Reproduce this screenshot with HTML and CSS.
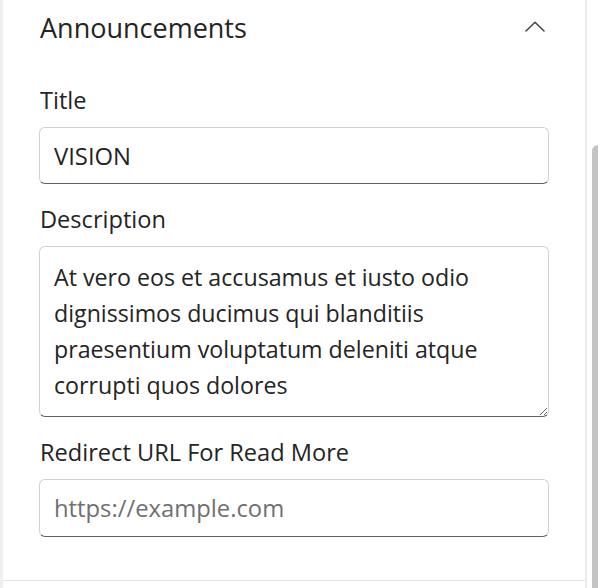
FILE: index.html
```html
<!DOCTYPE html>
<html lang="en">
<head>
<meta charset="utf-8">
<title>Announcements</title>
<link rel="stylesheet" href="styles.css">
</head>
<body>
<div class="frame">
  <div class="gutter"></div>
  <div class="panel">
    <section class="section">
      <div class="header">
        <h2 class="heading">Announcements</h2>
        <svg class="chevron" width="20" height="11" viewBox="0 0 20 11" aria-hidden="true">
          <path d="M1 10 L10 1.2 L19 10" fill="none" stroke="#424242" stroke-width="1.5" stroke-linecap="round" stroke-linejoin="round"/>
        </svg>
      </div>
      <div class="field">
        <label class="label" for="title">Title</label>
        <input class="input" id="title" type="text" value="VISION">
      </div>
      <div class="field">
        <label class="label" for="desc">Description</label>
        <textarea class="textarea" id="desc">At vero eos et accusamus et iusto odio dignissimos ducimus qui blanditiis praesentium voluptatum deleniti atque corrupti quos dolores</textarea>
      </div>
      <div class="field">
        <label class="label" for="url">Redirect URL For Read More</label>
        <input class="input input-url" id="url" type="text" placeholder="https://example.com">
      </div>
    </section>
  </div>
  <div class="scrollbar"><div class="thumb"></div></div>
</div>
</body>
</html>
```
FILE: styles.css
```css
* { box-sizing: border-box; }
html, body { margin: 0; padding: 0; background: #ffffff; }
body {
  font-family: "Open Sans", "Noto Sans", sans-serif;
  color: #242424;
}
.frame {
  display: flex;
  width: 598px;
  height: 588px;
  overflow: hidden;
}
.gutter {
  width: 3px;
  flex: none;
  background: #efefef;
}
.panel {
  width: 584px;
  flex: none;
  border-right: 2px solid #ebebeb;
  background: #fff;
}
.section {
  padding: 8px 36px 43px 36px;
  border-bottom: 1px solid #e6e6e6;
}
.header {
  display: flex;
  align-items: center;
  justify-content: space-between;
  height: 40px;
  padding-left: 1px;
  margin-bottom: 36px;
}
.heading {
  margin: 0;
  font-size: 27px;
  font-weight: 400;
  line-height: 40px;
  color: #242424;
}
.chevron {
  margin-right: 4px;
  margin-top: -4px;
}
.field {
  display: flex;
  flex-direction: column;
  margin-bottom: 19px;
}
.field:last-child { margin-bottom: 0; }
.label {
  font-size: 23.6px;
  line-height: 33px;
  padding-left: 1px;
  margin-bottom: 10px;
  color: #242424;
}
.input, .textarea {
  width: 510px;
  font-family: "Open Sans", "Noto Sans", sans-serif;
  color: #242424;
  border: 1px solid #d1d1d1;
  border-bottom-color: #616161;
  border-radius: 6px;
  background: #fff;
  outline: none;
  margin: 0;
}
.input {
  height: 57px;
  padding: 0 14px;
  font-size: 23.8px;
}
.input-url { height: 58px; }
.input::placeholder { color: #707070; }
.textarea {
  height: 171px;
  padding: 12px 14px;
  font-size: 23.2px;
  line-height: 36px;
  resize: vertical;
  overflow: hidden;
}
.scrollbar {
  flex: 1;
  display: flex;
  justify-content: flex-end;
  padding-top: 145px;
}
.thumb {
  width: 6px;
  background: #c4c4c4;
  border-top-left-radius: 6px;
}
```
